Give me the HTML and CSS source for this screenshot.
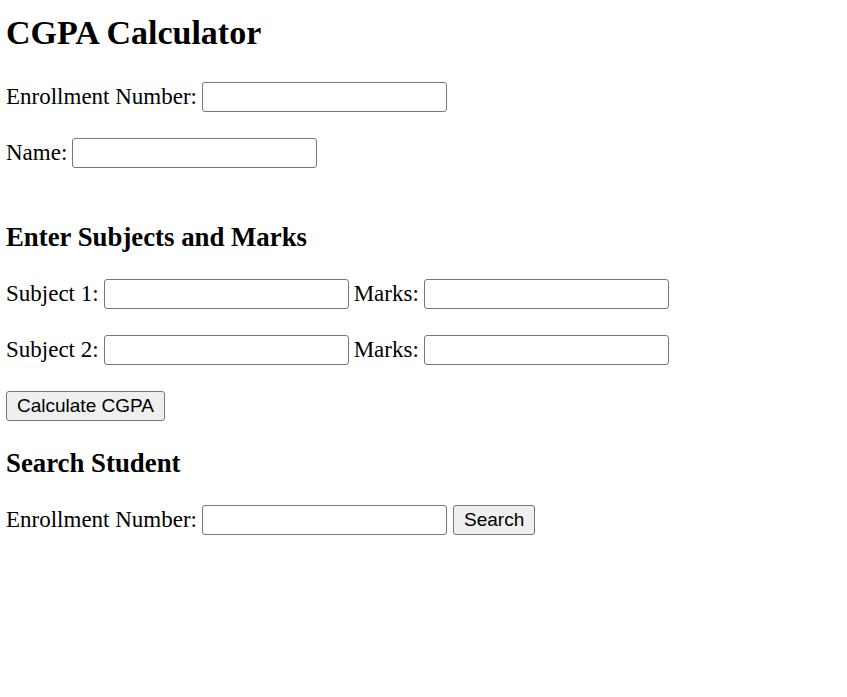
FILE: index.html
```html
<!DOCTYPE html>
<html lang="en">
<head>
<meta charset="utf-8">
<title>CGPA Calculator</title>
<link rel="stylesheet" href="styles.css">
</head>
<body>
  <h1 class="title">CGPA Calculator</h1>
  <div class="row row-first">
    <label class="label" for="enroll">Enrollment Number:</label>
    <input class="field" type="text" id="enroll">
  </div>
  <div class="row">
    <label class="label" for="name">Name:</label>
    <input class="field" type="text" id="name">
  </div>

  <h3 class="section">Enter Subjects and Marks</h3>
  <div class="row row-after-head">
    <label class="label" for="s1">Subject 1:</label>
    <input class="field" type="text" id="s1">
    <label class="label" for="m1">Marks:</label>
    <input class="field" type="text" id="m1">
  </div>
  <div class="row">
    <label class="label" for="s2">Subject 2:</label>
    <input class="field" type="text" id="s2">
    <label class="label" for="m2">Marks:</label>
    <input class="field" type="text" id="m2">
  </div>
  <div class="row">
    <button class="btn" type="button">Calculate CGPA</button>
  </div>

  <h3 class="section">Search Student</h3>
  <div class="row row-after-head">
    <label class="label" for="search">Enrollment Number:</label>
    <input class="field" type="text" id="search">
    <button class="btn" type="button">Search</button>
  </div>
</body>
</html>
```
FILE: styles.css
```css
html, body {
  background: #ffffff;
}
body {
  margin: 0;
  padding: 0 6px;
  font-family: "Liberation Serif", "Times New Roman", serif;
  font-size: 23px;
  color: #000000;
}
.title {
  font-size: 34px;
  font-weight: bold;
  line-height: 40px;
  margin: 13px 0 0 0;
}
.row {
  display: flex;
  align-items: center;
  gap: 5px;
  height: 30px;
  margin-top: 26px;
}
.row-first {
  margin-top: 29px;
}
.row-after-head {
  margin-top: 27px;
}
.label {
  line-height: 30px;
  white-space: nowrap;
}
.field {
  box-sizing: border-box;
  width: 245px;
  height: 30px;
  margin: 0;
  padding: 1px 3px;
  border: 1px solid #767676;
  border-radius: 3px;
  background: #ffffff;
  font-family: "Liberation Sans", Arial, sans-serif;
  font-size: 19px;
}
.btn {
  box-sizing: border-box;
  height: 30px;
  margin: 0;
  padding: 0 10px;
  border: 1px solid #767676;
  border-radius: 3px;
  background: #efefef;
  color: #000000;
  font-family: "Liberation Sans", Arial, sans-serif;
  font-size: 19px;
}
.field + .btn {
  margin-left: 1px;
}
.section {
  font-size: 26.8px;
  font-weight: bold;
  line-height: 30px;
  margin: 54px 0 0 0;
}
.row + .row + .row + .section {
  margin-top: 27px;
}
```
